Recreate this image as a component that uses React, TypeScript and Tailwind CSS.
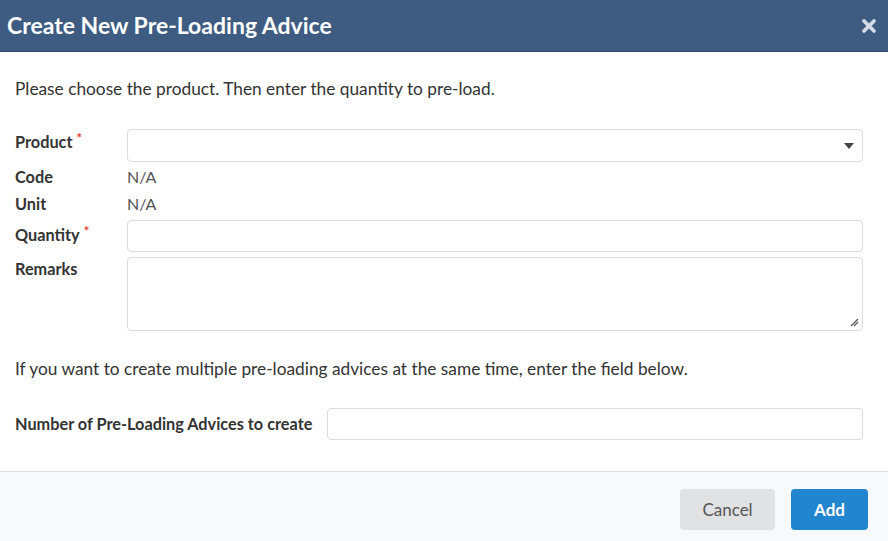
import { X } from "lucide-react";

function Req() {
  return <span className="ml-1 align-top text-[13px] leading-none text-[#e53935]">*</span>;
}

function Label({ children }: { children: React.ReactNode }) {
  return <div className="w-[112px] shrink-0 text-[16.3px] font-bold leading-[20px] text-[#333]">{children}</div>;
}

export default function App() {
  return (
    <div className="flex h-[541px] w-[888px] flex-col bg-white font-['Lato',sans-serif] text-[#333]">
      {/* Header */}
      <div className="flex h-[52px] shrink-0 items-center justify-between border-b border-[#2f4a6c] bg-[#3e5b82] pl-[7px] pr-[9px]">
        <h1 className="text-[23px] font-bold text-white">Create New Pre-Loading Advice</h1>
        <X className="h-5 w-5 text-[#d5dce6]" strokeWidth={4.5} />
      </div>

      {/* Body */}
      <div className="flex flex-1 flex-col px-[15px] pr-[25px]">
        <p className="mt-[25px] text-[17.3px] leading-[24px]">
          Please choose the product. Then enter the quantity to pre-load.
        </p>

        <div className="mt-[28px] flex items-start">
          <Label>
            <div className="pt-[3px]">
              Product
              <Req />
            </div>
          </Label>
          <div className="flex h-[33px] flex-1 items-center justify-end rounded border border-[#dcdcdc] pr-[8px]">
            <svg width="10" height="6" viewBox="0 0 10 6">
              <path d="M0 0h10L5 6z" fill="#444" />
            </svg>
          </div>
        </div>

        <div className="mt-[5px] flex h-[20px] items-center">
          <Label>Code</Label>
          <span className="text-[16px] text-[#555]">N/A</span>
        </div>
        <div className="mt-[7px] flex h-[20px] items-center">
          <Label>Unit</Label>
          <span className="text-[16px] text-[#555]">N/A</span>
        </div>

        <div className="mt-[6px] flex items-start">
          <Label>
            <div className="pt-[5px]">
              Quantity
              <Req />
            </div>
          </Label>
          <div className="h-[32px] flex-1 rounded border border-[#dcdcdc]" />
        </div>

        <div className="mt-[5px] flex items-start">
          <Label>
            <div className="pt-[2px]">Remarks</div>
          </Label>
          <div className="relative h-[74px] flex-1 rounded border border-[#dcdcdc]">
            <svg className="absolute bottom-[3px] right-[3px]" width="9" height="9" viewBox="0 0 9 9">
              <path d="M8 1L1 8M8 4L4 8" stroke="#555" strokeWidth="1.2" />
            </svg>
          </div>
        </div>

        <p className="mt-[26px] text-[17.3px] leading-[24px]">
          If you want to create multiple pre-loading advices at the same time, enter the field below.
        </p>

        <div className="mt-[27px] flex items-center">
          <div className="w-[312px] shrink-0 text-[16.3px] font-bold leading-[20px]">
            Number of Pre-Loading Advices to create
          </div>
          <div className="h-[32px] flex-1 rounded border border-[#dcdcdc]" />
        </div>
      </div>

      {/* Footer */}
      <div className="flex h-[70px] shrink-0 items-start justify-end gap-[16px] border-t border-[#dfe1e4] bg-[#f8f9fa] pr-[20px] pt-[17px]">
        <button className="h-[41px] w-[95px] rounded bg-[#e1e2e4] text-[17px] text-[#555]">Cancel</button>
        <button className="h-[41px] w-[77px] rounded bg-[#2185d0] text-[17px] font-bold text-white">Add</button>
      </div>
    </div>
  );
}
